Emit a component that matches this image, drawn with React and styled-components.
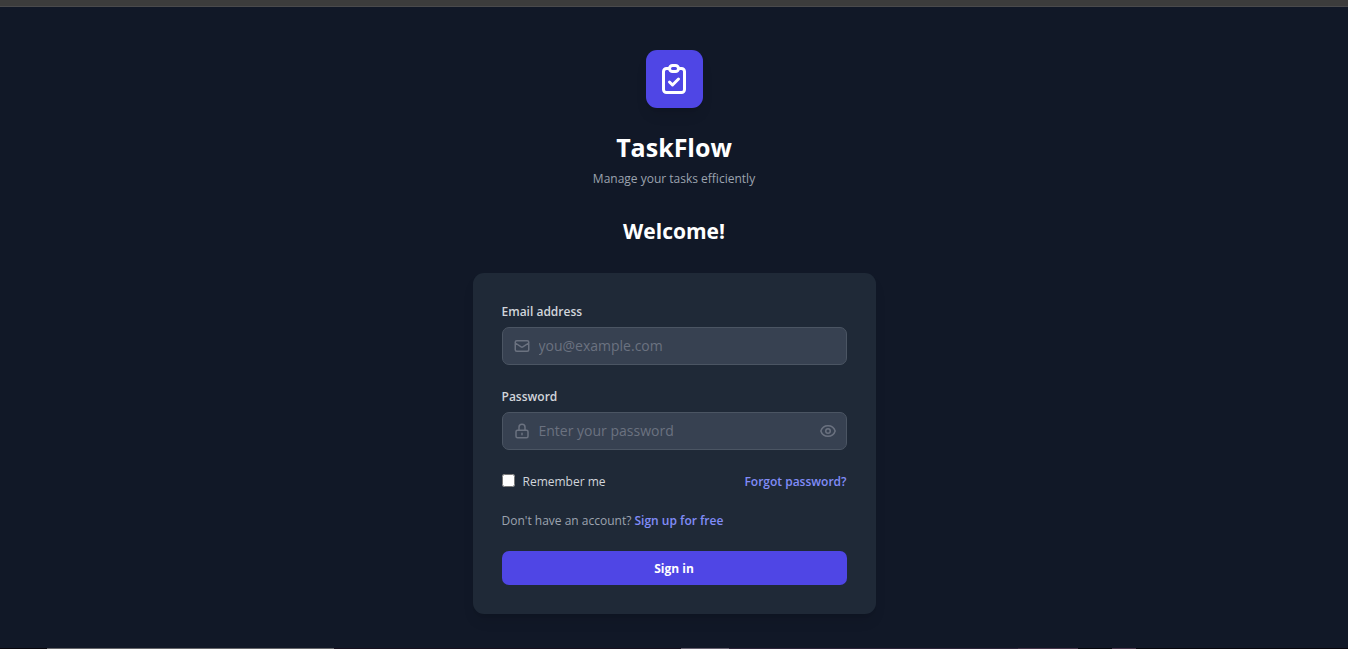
import React, { useState } from "react";
import styled, { createGlobalStyle } from "styled-components";

const GlobalStyle = createGlobalStyle`
  *, *::before, *::after { box-sizing: border-box; }
  body {
    margin: 0;
    background: #111827;
    color: #fff;
    font-family: "Open Sans", "Noto Sans", sans-serif;
    font-size: 12px;
    line-height: 18px;
  }
  h1, h2, p { margin: 0; }
`;

const Page = styled.div`
  min-height: 100vh;
  display: flex;
  flex-direction: column;
`;

const TopEdge = styled.div`
  height: 7px;
  background: #3c3c3c;
  border-bottom: 1px solid #4a4a4c;
`;

const BottomEdge = styled.div`
  height: 1px;
  margin-top: auto;
  background: linear-gradient(
    to right,
    #08060d 0 3.5%,
    #66666a 3.5% 24.8%,
    #17111f 24.8% 50.5%,
    #66606e 50.5% 54.1%,
    #2d2438 54.1% 75.5%,
    #463448 75.5% 80%,
    #08060d 80% 82.5%,
    #463448 82.5% 84.3%,
    #08060d 84.3%
  );
`;

const Main = styled.main`
  display: flex;
  flex-direction: column;
  align-items: center;
  padding: 43px 16px 32px;
`;

const Logo = styled.div`
  display: grid;
  place-items: center;
  width: 57px;
  height: 58px;
  border-radius: 11px;
  background: #4f46e5;
  box-shadow: 0 9px 14px -3px rgba(0, 0, 0, 0.1), 0 4px 5px -4px rgba(0, 0, 0, 0.1);
`;

const Brand = styled.h1`
  margin-top: 22px;
  font-size: 25px;
  font-weight: 700;
  line-height: 34px;
`;

const Tagline = styled.p`
  margin-top: 6px;
  color: #9ca3af;
`;

const Welcome = styled.h2`
  margin-top: 29px;
  font-size: 21px;
  font-weight: 700;
  line-height: 28px;
`;

const Card = styled.form`
  width: 100%;
  max-width: 403px;
  margin-top: 28px;
  padding: 29px;
  border-radius: 11px;
  background: #1f2937;
  box-shadow: 0 9px 14px -3px rgba(0, 0, 0, 0.1), 0 4px 5px -4px rgba(0, 0, 0, 0.1);
`;

const Field = styled.div`
  margin-bottom: 22px;
`;

const Label = styled.label`
  display: block;
  margin-bottom: 5px;
  color: #d1d5db;
  font-weight: 600;
  line-height: 20px;
`;

const InputBox = styled.div`
  display: flex;
  align-items: center;
  gap: 8px;
  height: 38px;
  padding: 0 9px 0 10px;
  border: 1px solid #4b5563;
  border-radius: 7px;
  background: #374151;
  color: #6b7280;
  &:focus-within { border-color: #6366f1; }
`;

const Input = styled.input`
  flex: 1;
  min-width: 0;
  padding: 0;
  border: 0;
  outline: 0;
  background: transparent;
  color: #fff;
  font-family: inherit;
  font-size: 14px;
  line-height: 22px;
  &::placeholder { color: #6b7280; opacity: 1; }
`;

const IconButton = styled.button`
  display: flex;
  padding: 0;
  border: 0;
  background: none;
  color: inherit;
  cursor: pointer;
`;

const Options = styled.div`
  display: flex;
  align-items: center;
  justify-content: space-between;
  line-height: 20px;
`;

const Remember = styled.label`
  display: flex;
  align-items: flex-start;
  gap: 8px;
  color: #d1d5db;
`;

const Checkbox = styled.input`
  width: 13px;
  height: 13px;
  margin: 2px 0 0;
  accent-color: #4f46e5;
`;

const Link = styled.a`
  color: #818cf8;
  font-weight: 600;
  text-decoration: none;
`;

const Signup = styled.p`
  margin: 20px 0 21px;
  color: #9ca3af;
`;

const Submit = styled.button`
  display: block;
  width: 100%;
  padding: 8px 0 6px;
  border: 0;
  border-radius: 7px;
  background: #4f46e5;
  color: #fff;
  font: inherit;
  font-weight: 700;
  line-height: 20px;
  cursor: pointer;
`;

const shapes = {
  clipboard: [
    "M9 5H7a2 2 0 00-2 2v12a2 2 0 002 2h10a2 2 0 002-2V7a2 2 0 00-2-2h-2M9 5a2 2 0 002 2h2a2 2 0 002-2M9 5a2 2 0 012-2h2a2 2 0 012 2m-6 9l2 2 4-4",
  ],
  mail: [
    "M3 8l7.89 5.26a2 2 0 002.22 0L21 8M5 19h14a2 2 0 002-2V7a2 2 0 00-2-2H5a2 2 0 00-2 2v10a2 2 0 002 2z",
  ],
  lock: [
    "M12 15v2m-6 4h12a2 2 0 002-2v-6a2 2 0 00-2-2H6a2 2 0 00-2 2v6a2 2 0 002 2zm10-10V7a4 4 0 00-8 0v4h8z",
  ],
  eye: [
    "M15 12a3 3 0 11-6 0 3 3 0 016 0z",
    "M2.458 12C3.732 7.943 7.523 5 12 5c4.478 0 8.268 2.943 9.542 7-1.274 4.057-5.064 7-9.542 7-4.477 0-8.268-2.943-9.542-7z",
  ],
};

function Icon({ name, size = 18 }) {
  return (
    <svg
      width={size}
      height={size}
      viewBox="0 0 24 24"
      fill="none"
      stroke="currentColor"
      strokeWidth="2"
      strokeLinecap="round"
      strokeLinejoin="round"
      aria-hidden="true"
    >
      {shapes[name].map((d) => (
        <path key={d} d={d} />
      ))}
    </svg>
  );
}

export default function App() {
  const [visible, setVisible] = useState(false);

  return (
    <Page>
      <GlobalStyle />
      <TopEdge />
      <Main>
        <Logo>
          <Icon name="clipboard" size={36} />
        </Logo>
        <Brand>TaskFlow</Brand>
        <Tagline>Manage your tasks efficiently</Tagline>
        <Welcome>Welcome!</Welcome>
        <Card onSubmit={(event) => event.preventDefault()}>
          <Field>
            <Label htmlFor="email">Email address</Label>
            <InputBox>
              <Icon name="mail" />
              <Input id="email" type="email" placeholder="you@example.com" />
            </InputBox>
          </Field>
          <Field>
            <Label htmlFor="password">Password</Label>
            <InputBox>
              <Icon name="lock" />
              <Input
                id="password"
                type={visible ? "text" : "password"}
                placeholder="Enter your password"
              />
              <IconButton
                type="button"
                aria-label="Show password"
                aria-pressed={visible}
                onClick={() => setVisible(!visible)}
              >
                <Icon name="eye" />
              </IconButton>
            </InputBox>
          </Field>
          <Options>
            <Remember htmlFor="remember">
              <Checkbox id="remember" type="checkbox" />
              Remember me
            </Remember>
            <Link href="#forgot">Forgot password?</Link>
          </Options>
          <Signup>
            Don't have an account? <Link href="#signup">Sign up for free</Link>
          </Signup>
          <Submit type="submit">Sign in</Submit>
        </Card>
      </Main>
      <BottomEdge />
    </Page>
  );
}
